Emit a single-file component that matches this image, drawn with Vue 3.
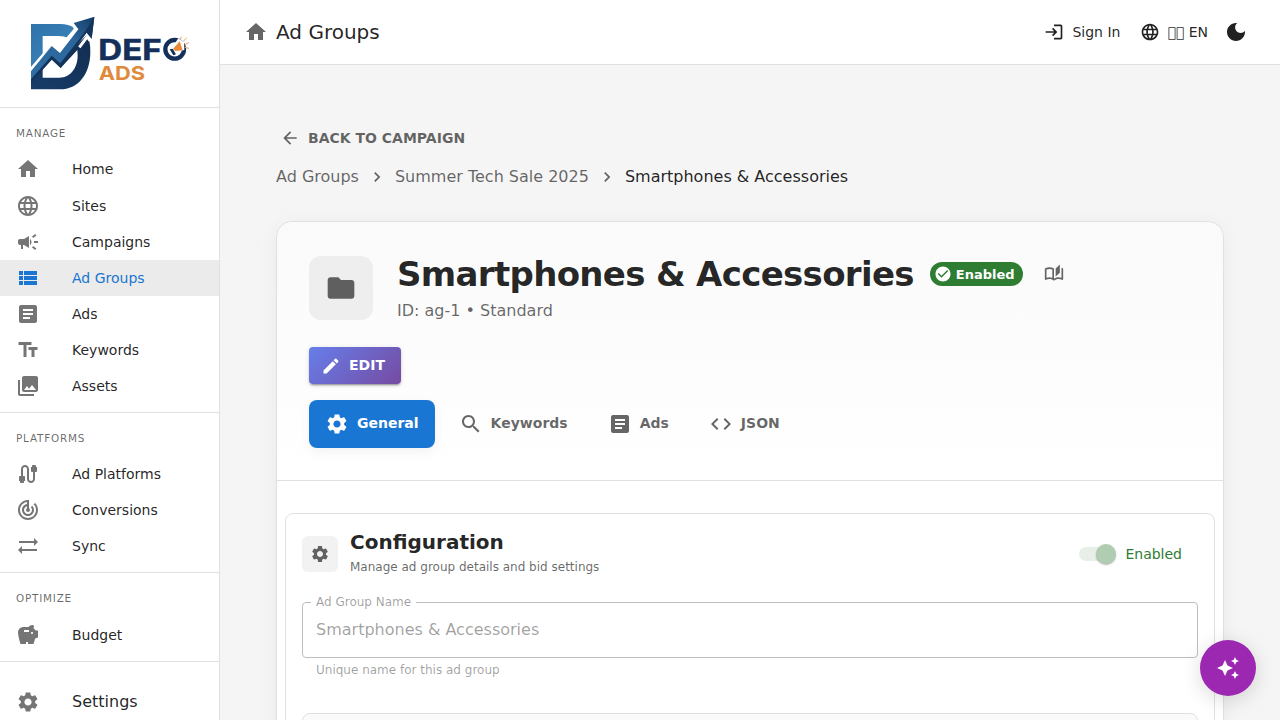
<template>
  <div class="layout">
    <aside class="sidebar">
      <div class="logo">
        <svg class="logo__image" viewBox="0 0 660 321">
          <defs>
            <linearGradient id="lightBlue" x1="0" y1="0" x2="1" y2="1">
              <stop offset="0" stop-color="#2f74aa" />
              <stop offset="1" stop-color="#3d87bd" />
            </linearGradient>
            <linearGradient id="arrowBlue" x1="0" y1="1" x2="1" y2="0">
              <stop offset="0" stop-color="#2f6ea4" />
              <stop offset="0.65" stop-color="#2b669b" />
              <stop offset="1" stop-color="#143c66" />
            </linearGradient>
            <linearGradient id="darkBlue" x1="0" y1="1" x2="1" y2="0">
              <stop offset="0" stop-color="#173e69" />
              <stop offset="1" stop-color="#122c50" />
            </linearGradient>
          </defs>
          <path fill="url(#lightBlue)" d="M93 72H180Q206 73 224 83L200 112Q188 108 174 108H128V164L93 205Z" />
          <path fill="url(#darkBlue)" d="M93 268V214L153 160L180 184L260 106Q272 125 271 158C270 222 235 268 180 268ZM128 233H178C212 233 232 204 233 168L232 150L182 204L156 178L128 208Z" />
          <path fill="none" stroke="#fff" stroke-width="9" d="M91 210L155 135L179 155L228 89L215 66M238 142L262 110L270 122" />
          <path fill="url(#arrowBlue)" d="M93 214L155 138L180 159L235 88L221 69L283 50L275 116L259 96L181 196L155 170L93 240Z" />
          <path fill="#14345c" d="M93 238L155 167L181 190L256 94L283 50L275 116L260 98L182 204L155 179L93 248Z" />
          <circle cx="524" cy="148" r="28" fill="none" stroke="#14305a" stroke-width="13" />
          <path fill="#fff" d="M518 140L535 115L552 126L553 150L518 158Z" />
          <path fill="#e9893a" d="M519 147L539 124L548 151L526 153Z" />
          <path fill="#14305a" d="M509 148L518 146L528 163L520 166Z" />
          <path fill="none" stroke="#e9a468" stroke-width="3" d="M541 119L544 110M550 124L560 113M554 134L567 128M554 142L567 145" />
          <text class="logo__text">
            <tspan class="logo__name" x="295" y="180" textLength="190" lengthAdjust="spacingAndGlyphs">DEF</tspan>
            <tspan class="logo__ads" x="296" y="240" textLength="139" lengthAdjust="spacingAndGlyphs">ADS</tspan>
          </text>
        </svg>
      </div>

      <nav v-for="section in sections" :key="section.title" class="menu">
        <p class="menu__title">{{ section.title }}</p>
        <a v-for="item in section.items" :key="item.label" href="#" class="menu__item" :class="{ menu__item_active: item.active }" @click.prevent>
          <svg class="icon" viewBox="0 0 24 24"><path :d="icons[item.icon]" /></svg>
          <span>{{ item.label }}</span>
        </a>
      </nav>

      <a href="#" class="menu__item menu__item_settings" @click.prevent>
        <svg class="icon" viewBox="0 0 24 24"><path :d="icons.settings" /></svg>
        <span>Settings</span>
      </a>
    </aside>

    <div class="page">
      <header class="topbar">
        <svg class="icon topbar__home" viewBox="0 0 24 24"><path :d="icons.home" /></svg>
        <h1 class="topbar__title">Ad Groups</h1>
        <button class="topbar__button topbar__button_login">
          <svg class="icon icon_small" viewBox="0 0 24 24"><path :d="icons.login" /></svg>
          <span>Sign In</span>
        </button>
        <button class="topbar__button topbar__button_lang">
          <svg class="icon icon_small" viewBox="0 0 24 24"><path :d="icons.globe" /></svg>
          <span>&#xE801;&#xE801; EN</span>
        </button>
        <button class="topbar__button">
          <svg class="icon" viewBox="0 0 24 24"><path :d="icons.moon" /></svg>
        </button>
      </header>

      <main class="content">
        <a href="#" class="back" @click.prevent>
          <svg class="icon icon_small" viewBox="0 0 24 24"><path :d="icons.back" /></svg>
          <span>BACK TO CAMPAIGN</span>
        </a>

        <div class="breadcrumbs">
          <span>Ad Groups</span>
          <svg class="icon icon_small" viewBox="0 0 24 24"><path :d="icons.next" /></svg>
          <span>Summer Tech Sale 2025</span>
          <svg class="icon icon_small" viewBox="0 0 24 24"><path :d="icons.next" /></svg>
          <span class="breadcrumbs__current">Smartphones &amp; Accessories</span>
        </div>

        <section class="card">
          <div class="card__header">
            <div class="group">
              <div class="group__avatar">
                <svg class="icon icon_large" viewBox="0 0 24 24"><path :d="icons.folder" /></svg>
              </div>
              <div>
                <div class="group__heading">
                  <h2 class="group__title">Smartphones &amp; Accessories</h2>
                  <span class="chip">
                    <svg class="icon chip__icon" viewBox="0 0 24 24"><path :d="icons.check" /></svg>
                    Enabled
                  </span>
                  <svg class="icon icon_small group__docs" viewBox="0 0 24 24"><path :d="icons.book" /></svg>
                </div>
                <p class="group__info">ID: ag-1 • Standard</p>
              </div>
            </div>

            <button class="edit">
              <svg class="icon icon_small" viewBox="0 0 24 24"><path :d="icons.edit" /></svg>
              <span>EDIT</span>
            </button>

            <div class="tabs">
              <button v-for="tab in tabs" :key="tab.label" class="tabs__item" :class="{ tabs__item_active: activeTab === tab.label }" @click="activeTab = tab.label">
                <svg class="icon" viewBox="0 0 24 24"><path :d="icons[tab.icon]" /></svg>
                <span>{{ tab.label }}</span>
              </button>
            </div>
          </div>

          <div class="config">
            <div class="config__header">
              <div class="config__avatar">
                <svg class="icon icon_small" viewBox="0 0 24 24"><path :d="icons.settings" /></svg>
              </div>
              <div class="config__text">
                <h3 class="config__title">Configuration</h3>
                <p class="config__description">Manage ad group details and bid settings</p>
              </div>
              <div class="switch">
                <span class="switch__track"><span class="switch__thumb"></span></span>
                <span class="switch__label">Enabled</span>
              </div>
            </div>

            <fieldset class="field">
              <legend class="field__label">Ad Group Name</legend>
              <input class="field__input" type="text" v-model="groupName" disabled />
            </fieldset>
            <p class="field__helper">Unique name for this ad group</p>

            <div class="config__panel"></div>
          </div>
        </section>
      </main>
    </div>

    <button class="fab">
      <svg class="icon" viewBox="0 0 24 24"><path :d="icons.sparkle" /></svg>
    </button>
  </div>
</template>

<script setup>
import { ref } from 'vue';

const activeTab = ref('General');
const groupName = ref('Smartphones & Accessories');

const sections = [
  {
    title: 'MANAGE',
    items: [
      { label: 'Home', icon: 'home' },
      { label: 'Sites', icon: 'globe' },
      { label: 'Campaigns', icon: 'campaign' },
      { label: 'Ad Groups', icon: 'list', active: true },
      { label: 'Ads', icon: 'article' },
      { label: 'Keywords', icon: 'text' },
      { label: 'Assets', icon: 'images' },
    ],
  },
  {
    title: 'PLATFORMS',
    items: [
      { label: 'Ad Platforms', icon: 'cable' },
      { label: 'Conversions', icon: 'target' },
      { label: 'Sync', icon: 'sync' },
    ],
  },
  {
    title: 'OPTIMIZE',
    items: [{ label: 'Budget', icon: 'savings' }],
  },
];

const tabs = [
  { label: 'General', icon: 'settings' },
  { label: 'Keywords', icon: 'search' },
  { label: 'Ads', icon: 'article' },
  { label: 'JSON', icon: 'code' },
];

const icons = {
  home: 'M10 20v-6h4v6h5v-8h3L12 3 2 12h3v8z',
  globe: 'M11.99 2C6.47 2 2 6.48 2 12s4.47 10 9.99 10C17.52 22 22 17.52 22 12S17.52 2 11.99 2zm6.93 6h-2.95c-.32-1.25-.78-2.45-1.38-3.56 1.84.63 3.37 1.91 4.33 3.56zM12 4.04c.83 1.2 1.48 2.53 1.91 3.96h-3.82c.43-1.43 1.08-2.76 1.91-3.96zM4.26 14C4.1 13.36 4 12.69 4 12s.1-1.36.26-2h3.38c-.08.66-.14 1.32-.14 2 0 .68.06 1.34.14 2H4.26zm.82 2h2.95c.32 1.25.78 2.45 1.38 3.56-1.84-.63-3.37-1.9-4.33-3.56zm2.95-8H5.08c.96-1.66 2.49-2.93 4.33-3.56C8.81 5.55 8.35 6.75 8.03 8zM12 19.96c-.83-1.2-1.48-2.53-1.91-3.96h3.82c-.43 1.43-1.08 2.76-1.91 3.96zM14.34 14H9.66c-.09-.66-.16-1.32-.16-2 0-.68.07-1.35.16-2h4.68c.09.65.16 1.32.16 2 0 .68-.07 1.34-.16 2zm.25 5.56c.6-1.11 1.06-2.31 1.38-3.56h2.95c-.96 1.65-2.49 2.93-4.33 3.56zM16.36 14c.08-.66.14-1.32.14-2 0-.68-.06-1.34-.14-2h3.38c.16.64.26 1.31.26 2s-.1 1.36-.26 2h-3.38z',
  campaign: 'M18 11v2h4v-2h-4zM16 17.61c.96.71 2.21 1.65 3.2 2.39.4-.53.8-1.07 1.2-1.6-.99-.74-2.24-1.68-3.2-2.4-.4.54-.8 1.08-1.2 1.61zM20.4 5.6c-.4-.53-.8-1.07-1.2-1.6-.99.74-2.24 1.68-3.2 2.4.4.53.8 1.07 1.2 1.6.96-.72 2.21-1.65 3.2-2.4zM4 9c-1.1 0-2 .9-2 2v2c0 1.1.9 2 2 2h1v4h2v-4h1l5 3V6L8 9H4zM15.5 12c0-1.33-.58-2.53-1.5-3.35v6.69c.92-.81 1.5-2.01 1.5-3.34z',
  list: 'M3 14h4v-4H3v4zm0 5h4v-4H3v4zM3 9h4V5H3v4zm5 5h13v-4H8v4zm0 5h13v-4H8v4zM8 5v4h13V5H8z',
  article: 'M19 3H5c-1.1 0-2 .9-2 2v14c0 1.1.9 2 2 2h14c1.1 0 2-.9 2-2V5c0-1.1-.9-2-2-2zm-5 14H7v-2h7v2zm3-4H7v-2h10v2zm0-4H7V7h10v2z',
  text: 'M2.5 4v3h5v12h3V7h5V4h-13zm19 5h-9v3h3v7h3v-7h3V9z',
  images: 'M22 16V4c0-1.1-.9-2-2-2H8c-1.1 0-2 .9-2 2v12c0 1.1.9 2 2 2h12c1.1 0 2-.9 2-2zm-11-4l2.03 2.71L16 11l4 5H8l3-4zM2 6v14c0 1.1.9 2 2 2h14v-2H4V6H2z',
  cable: 'M20 5V4c0-.55-.45-1-1-1h-2c-.55 0-1 .45-1 1v1h-1v4c0 .55.45 1 1 1h1v7c0 1.1-.9 2-2 2s-2-.9-2-2V7c0-2.21-1.79-4-4-4S5 4.79 5 7v7H4c-.55 0-1 .45-1 1v4h1v1c0 .55.45 1 1 1h2c.55 0 1-.45 1-1v-1h1v-4c0-.55-.45-1-1-1H7V7c0-1.1.9-2 2-2s2 .9 2 2v10c0 2.21 1.79 4 4 4s4-1.79 4-4v-7h1c.55 0 1-.45 1-1V5h-1z',
  target: 'M19.07 4.93l-1.41 1.41C19.1 7.79 20 9.79 20 12c0 4.42-3.58 8-8 8s-8-3.58-8-8c0-4.08 3.05-7.44 7-7.93v2.02C8.16 6.57 6 9.03 6 12c0 3.31 2.69 6 6 6s6-2.69 6-6c0-1.66-.67-3.16-1.76-4.24l-1.41 1.41C15.55 9.9 16 10.9 16 12c0 2.21-1.79 4-4 4s-4-1.79-4-4c0-1.86 1.28-3.41 3-3.86v2.14c-.6.35-1 .98-1 1.72 0 1.1.9 2 2 2s2-.9 2-2c0-.74-.4-1.38-1-1.72V2h-1C6.48 2 2 6.48 2 12s4.48 10 10 10 10-4.48 10-10c0-2.76-1.12-5.26-2.93-7.07z',
  sync: 'M22 8l-4-4v3H3v2h15v3l4-4zM2 16l4 4v-3h15v-2H6v-3l-4 4z',
  savings: 'M19.83 7.5l-2.27-2.27c.07-.42.18-.81.32-1.15.08-.18.12-.37.12-.58 0-.83-.67-1.5-1.5-1.5-1.64 0-3.09.79-4 2h-5C4.46 4 2 6.46 2 9.5S4.5 21 4.5 21H10v-2h2v2h5.5l1.68-5.59 2.82-.94V7.5h-2.17zM13 9H8V7h5v2zm3 2c-.55 0-1-.45-1-1s.45-1 1-1 1 .45 1 1-.45 1-1 1z',
  settings: 'M19.14 12.94c.04-.3.06-.61.06-.94 0-.32-.02-.64-.07-.94l2.03-1.58c.18-.14.23-.41.12-.61l-1.92-3.32c-.12-.22-.37-.29-.59-.22l-2.39.96c-.5-.38-1.03-.7-1.62-.94l-.36-2.54c-.04-.24-.24-.41-.48-.41h-3.84c-.24 0-.43.17-.47.41l-.36 2.54c-.59.24-1.13.57-1.62.94l-2.39-.96c-.22-.08-.47 0-.59.22L2.74 8.87c-.12.21-.08.47.12.61l2.03 1.58c-.05.3-.09.63-.09.94s.02.64.07.94l-2.03 1.58c-.18.14-.23.41-.12.61l1.92 3.32c.12.22.37.29.59.22l2.39-.96c.5.38 1.03.7 1.62.94l.36 2.54c.05.24.24.41.48.41h3.84c.24 0 .44-.17.47-.41l.36-2.54c.59-.24 1.13-.56 1.62-.94l2.39.96c.22.08.47 0 .59-.22l1.92-3.32c.12-.22.07-.47-.12-.61l-2.01-1.58zM12 15.6c-1.98 0-3.6-1.62-3.6-3.6s1.62-3.6 3.6-3.6 3.6 1.62 3.6 3.6-1.62 3.6-3.6 3.6z',
  login: 'M11 7L9.6 8.4l2.6 2.6H2v2h10.2l-2.6 2.6L11 17l5-5-5-5zm9 12h-8v2h8c1.1 0 2-.9 2-2V5c0-1.1-.9-2-2-2h-8v2h8v14z',
  moon: 'M12 3c-4.97 0-9 4.03-9 9s4.03 9 9 9 9-4.03 9-9c0-.46-.04-.92-.1-1.36-.98 1.37-2.58 2.26-4.4 2.26-2.98 0-5.4-2.42-5.4-5.4 0-1.81.89-3.42 2.26-4.4-.44-.06-.9-.1-1.36-.1z',
  back: 'M20 11H7.83l5.59-5.59L12 4l-8 8 8 8 1.41-1.41L7.83 13H20v-2z',
  next: 'M10 6L8.59 7.41 13.17 12l-4.58 4.59L10 18l6-6z',
  folder: 'M10 4H4c-1.1 0-1.99.9-1.99 2L2 18c0 1.1.9 2 2 2h16c1.1 0 2-.9 2-2V8c0-1.1-.9-2-2-2h-8l-2-2z',
  check: 'M12 2C6.48 2 2 6.48 2 12s4.48 10 10 10 10-4.48 10-10S17.52 2 12 2zm-2 15l-5-5 1.41-1.41L10 14.17l7.59-7.59L19 8l-9 9z',
  book: 'M22.47 5.2c-.47-.24-.96-.44-1.47-.61v12.03c-1.14-.41-2.31-.62-3.5-.62-1.9 0-3.78.54-5.5 1.58V5.48C10.38 4.55 8.51 4 6.5 4c-1.79 0-3.48.44-4.97 1.2-.33.16-.53.51-.53.88v12.08c0 .58.47.99 1 .99.16 0 .32-.04.48-.12C3.69 18.4 5.05 18 6.5 18c2.07 0 3.98.82 5.5 2 1.52-1.18 3.43-2 5.5-2 1.45 0 2.81.4 4.02 1.04.16.08.32.12.48.12.52 0 1-.41 1-.99V6.08c0-.37-.2-.72-.53-.88zM10 16.62C8.86 16.21 7.69 16 6.5 16s-2.36.21-3.5.62V6.71C4.11 6.24 5.28 6 6.5 6c1.2 0 2.39.25 3.5.72v9.9zM19 .5l-5 5V15l5-4.5V.5z',
  edit: 'M3 17.25V21h3.75L17.81 9.94l-3.75-3.75L3 17.25zM20.71 7.04c.39-.39.39-1.02 0-1.41l-2.34-2.34c-.39-.39-1.02-.39-1.41 0l-1.83 1.83 3.75 3.75 1.83-1.83z',
  search: 'M15.5 14h-.79l-.28-.27C15.41 12.59 16 11.11 16 9.5 16 5.91 13.09 3 9.5 3S3 5.91 3 9.5 5.91 16 9.5 16c1.61 0 3.09-.59 4.23-1.57l.27.28v.79l5 4.99L20.49 19l-4.99-5zm-6 0C7.01 14 5 11.99 5 9.5S7.01 5 9.5 5 14 7.01 14 9.5 11.99 14 9.5 14z',
  code: 'M9.4 16.6L4.8 12l4.6-4.6L8 6l-6 6 6 6 1.4-1.4zm5.2 0l4.6-4.6-4.6-4.6L16 6l6 6-6 6-1.4-1.4z',
  sparkle: 'M19 9l1.25-2.75L23 5l-2.75-1.25L19 1l-1.25 2.75L15 5l2.75 1.25L19 9zm-7.5.5L9 4 6.5 9.5 1 12l5.5 2.5L9 20l2.5-5.5L17 12l-5.5-2.5zM19 15l-1.25 2.75L15 19l2.75 1.25L19 23l1.25-2.75L23 19l-2.75-1.25L19 15z',
};
</script>

<style>
body {
  overflow: hidden;
}
</style>

<style scoped>
* {
  box-sizing: border-box;
}

.layout {
  display: flex;
  height: 100vh;
  overflow: hidden;
  background-color: #f5f5f5;
  color: rgba(0, 0, 0, 0.87);
  font-family: "DejaVu Sans", sans-serif;
  font-size: 14px;
}

h1, h2, h3, p {
  margin: 0;
}

a {
  color: inherit;
  text-decoration: none;
}

button {
  border: none;
  background: none;
  padding: 0;
  color: inherit;
  font-family: inherit;
  cursor: pointer;
}

.icon {
  display: block;
  flex-shrink: 0;
  width: 24px;
  height: 24px;
  fill: currentColor;
}

.icon_small {
  width: 20px;
  height: 20px;
}

.icon_large {
  width: 32px;
  height: 32px;
}

.sidebar {
  flex-shrink: 0;
  width: 220px;
  border-right: 1px solid #e0e0e0;
  background-color: #fff;
}

.logo {
  height: 108px;
  border-bottom: 1px solid #e0e0e0;
}

.logo__image {
  display: block;
  width: 220px;
  height: 107px;
}

.logo__text {
  font-family: Inter, sans-serif;
  font-weight: 700;
}

.logo__name {
  fill: #14305a;
  stroke: #14305a;
  stroke-width: 1.5px;
  font-size: 84px;
}

.logo__ads {
  fill: #e08a3c;
  font-size: 58px;
}

.menu {
  padding: 8px 0;
  border-bottom: 1px solid #e0e0e0;
}

.menu__title {
  height: 35.485px;
  padding-left: 16px;
  color: rgba(0, 0, 0, 0.6);
  font-size: 10.4px;
  line-height: 35px;
  letter-spacing: 0.8px;
}

.menu__item {
  display: flex;
  align-items: center;
  gap: 32px;
  height: 36.02px;
  padding-left: 16px;
}

.menu__item .icon {
  color: rgba(0, 0, 0, 0.54);
}

.menu__item_active {
  background-color: #ebebeb;
  color: #1976d2;
}

.menu__item_active .icon {
  color: #1976d2;
}

.menu__item_settings {
  height: 48px;
  margin-top: 16px;
  font-size: 16px;
}

.page {
  flex: 1;
  min-width: 0;
}

.topbar {
  display: flex;
  align-items: center;
  height: 65px;
  padding: 0 32px 0 24px;
  border-bottom: 1px solid #e0e0e0;
  background-color: #fff;
}

.topbar__home {
  margin-right: 8px;
  color: rgba(0, 0, 0, 0.6);
}

.topbar__title {
  flex: 1;
  font-size: 20px;
  font-weight: 400;
}

.topbar__button {
  display: flex;
  align-items: center;
  gap: 8px;
  font-size: 14px;
}

.topbar__button_login {
  margin-right: 20px;
}

.topbar__button_lang {
  gap: 7px;
  margin-right: 16px;
}

.content {
  padding: 61px 56px 0;
}

.back {
  display: flex;
  align-items: center;
  gap: 8px;
  height: 24px;
  padding-left: 4px;
  color: rgba(0, 0, 0, 0.6);
  font-size: 14px;
  font-weight: 700;
}

.breadcrumbs {
  display: flex;
  align-items: center;
  gap: 8px;
  height: 24px;
  margin: 14px 0 33px;
  color: rgba(0, 0, 0, 0.6);
  font-size: 16px;
}

.breadcrumbs .icon {
  margin-top: 2px;
}

.breadcrumbs__current {
  color: rgba(0, 0, 0, 0.87);
}

.card {
  height: 700px;
  border: 1px solid #e0e0e0;
  border-radius: 16px;
  background-color: #fff;
  box-shadow: 0 4px 20px rgba(0, 0, 0, 0.05);
}

.card__header {
  height: 259px;
  padding: 30px 32px 32px;
  border-bottom: 1px solid #e0e0e0;
  border-radius: 16px 16px 0 0;
  background: linear-gradient(180deg, #fafafa 0%, #fff 100%);
}

.group {
  display: flex;
  align-items: center;
  gap: 24px;
  height: 72px;
}

.group__avatar {
  display: flex;
  align-items: center;
  justify-content: center;
  width: 64px;
  height: 64px;
  border-radius: 12px;
  background-color: #eee;
  color: rgba(0, 0, 0, 0.6);
}

.group__heading {
  display: flex;
  align-items: center;
  height: 44px;
}

.group__title {
  font-size: 34px;
  font-weight: 700;
  letter-spacing: -0.68px;
  line-height: 44px;
}

.chip {
  display: flex;
  align-items: center;
  gap: 4px;
  height: 24px;
  margin-left: 16px;
  padding: 0 8px 0 4px;
  border-radius: 12px;
  background-color: #2e7d32;
  color: #fff;
  font-size: 13px;
  font-weight: 700;
}

.chip__icon {
  width: 18px;
  height: 18px;
}

.group__docs {
  margin-left: 21px;
  color: rgba(0, 0, 0, 0.6);
}

.group__info {
  height: 28px;
  color: rgba(0, 0, 0, 0.6);
  font-size: 16px;
  line-height: 30px;
}

.edit {
  display: flex;
  align-items: center;
  gap: 8px;
  height: 37px;
  margin-top: 23px;
  padding: 0 16px 0 12px;
  border-radius: 4px;
  background: linear-gradient(135deg, #667eea 0%, #764ba2 100%);
  box-shadow: 0 3px 1px -2px rgba(0, 0, 0, 0.2), 0 2px 2px rgba(0, 0, 0, 0.14), 0 1px 5px rgba(0, 0, 0, 0.12);
  color: #fff;
  font-size: 14px;
  font-weight: 700;
}

.edit span,
.tabs__item span {
  padding-bottom: 2px;
}

.tabs {
  display: flex;
  gap: 8px;
  margin-top: 16px;
}

.tabs__item {
  display: flex;
  align-items: center;
  gap: 8px;
  height: 48px;
  padding: 0 16px;
  border-radius: 8px;
  color: rgba(0, 0, 0, 0.6);
  font-size: 14px;
  font-weight: 700;
}

.tabs__item_active {
  background-color: #1976d2;
  box-shadow: 0 4px 12px rgba(0, 0, 0, 0.05);
  color: #fff;
}

.config {
  height: 400px;
  margin: 32px 8px 0;
  padding: 16px;
  border: 1px solid #e0e0e0;
  border-radius: 8px;
}

.config__header {
  display: flex;
  align-items: center;
  height: 48px;
}

.config__avatar {
  display: flex;
  align-items: center;
  justify-content: center;
  width: 36px;
  height: 36px;
  border-radius: 6px;
  background-color: #f2f2f2;
  color: rgba(0, 0, 0, 0.6);
}

.config__text {
  flex: 1;
  margin-left: 12px;
  padding-bottom: 3px;
}

.config__title {
  margin-bottom: 1px;
  font-size: 20px;
  line-height: 28px;
}

.config__description {
  color: rgba(0, 0, 0, 0.6);
  font-size: 12px;
  line-height: 20px;
}

.switch {
  display: flex;
  align-items: center;
  gap: 12px;
  margin-right: 16px;
}

.switch__track {
  position: relative;
  width: 34px;
  height: 14px;
  border-radius: 7px;
  background-color: #e7efe8;
}

.switch__thumb {
  position: absolute;
  top: -3px;
  right: -3px;
  width: 20px;
  height: 20px;
  border-radius: 50%;
  background-color: #b0cdb2;
  box-shadow: 0 1px 1px rgba(0, 0, 0, 0.2), 0 1px 3px rgba(0, 0, 0, 0.12);
}

.switch__label {
  color: #2e7d32;
  font-size: 14px;
}

.field {
  height: 63px;
  margin: 17px 0 0;
  padding: 0 13px;
  border: 1px solid #bdbdbd;
  border-radius: 4px;
}

.field__label {
  margin-left: -5px;
  padding: 0 5px;
  color: rgba(0, 0, 0, 0.38);
  font-size: 12px;
  line-height: 14px;
}

.field__input {
  display: block;
  width: 100%;
  height: 40px;
  padding: 0;
  border: none;
  background: none;
  color: rgba(0, 0, 0, 0.38);
  font-family: inherit;
  font-size: 16px;
}

.field__helper {
  margin: 2px 14px 0;
  color: rgba(0, 0, 0, 0.38);
  font-size: 12px;
  line-height: 20px;
}

.config__panel {
  height: 80px;
  margin-top: 33px;
  border: 1px solid #e0e0e0;
  border-radius: 8px;
  background-color: #fafafa;
}

.fab {
  position: fixed;
  right: 24px;
  bottom: 24px;
  display: flex;
  align-items: center;
  justify-content: center;
  width: 56px;
  height: 56px;
  border-radius: 50%;
  background-color: #9c27b0;
  box-shadow: 0 4px 20px rgba(0, 0, 0, 0.15);
  color: #fff;
}
</style>
